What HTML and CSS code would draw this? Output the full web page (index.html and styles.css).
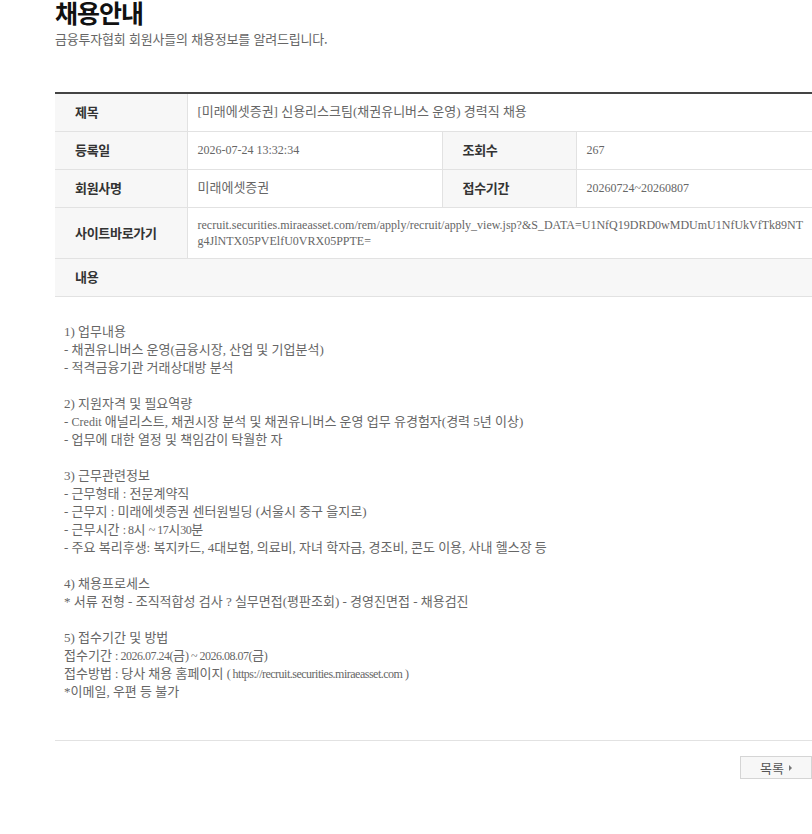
FILE: index.html
```
<!DOCTYPE html>
<html lang="ko">
  <head>
    <meta charset="UTF-8" />
    <meta name="viewport" content="width=device-width, initial-scale=1.0" />
    <title>채용안내</title>
    <link rel="stylesheet" href="styles.css">
  </head>
  <body>
    <div class="wrap">
      <div class="page-head">
        <h1 class="page-title">채용안내</h1>
        <p class="page-desc">금융투자협회 회원사들의 채용정보를 알려드립니다.</p>
      </div>

      <table class="view-table">
        <colgroup>
          <col class="col-label" />
          <col class="col-value" />
          <col class="col-label2" />
          <col />
        </colgroup>
        <tr>
          <th>제목</th>
          <td colspan="3">[미래에셋증권] 신용리스크팀(채권유니버스 운영) 경력직 채용</td>
        </tr>
        <tr>
          <th>등록일</th>
          <td class="en">2026-07-24 13:32:34</td>
          <th class="th-mid">조회수</th>
          <td class="en">267</td>
        </tr>
        <tr>
          <th>회원사명</th>
          <td>미래에셋증권</td>
          <th class="th-mid">접수기간</th>
          <td class="en">20260724~20260807</td>
        </tr>
        <tr>
          <th>사이트바로가기</th>
          <td colspan="3" class="td-link en">recruit.securities.miraeasset.com/rem/apply/recruit/apply_view.jsp?&amp;S_DATA=U1NfQ19DRD0wMDUmU1NfUkVfTk89NT g4JlNTX05PVElfU0VRX05PPTE=</td>
        </tr>
        <tr>
          <th colspan="4" class="th-full">내용</th>
        </tr>
      </table>

      <div class="view-body">
        <p>1) 업무내용<br>
        - 채권유니버스 운영(금융시장, 산업 및 기업분석)<br>
        - 적격금융기관 거래상대방 분석</p>

        <p>2) 지원자격 및 필요역량<br>
        - <span class="en">Credit</span> 애널리스트, 채권시장 분석 및 채권유니버스 운영 업무 유경험자(경력 5년 이상)<br>
        - 업무에 대한 열정 및 책임감이 탁월한 자</p>

        <p>3) 근무관련정보<br>
        - 근무형태 : 전문계약직<br>
        - 근무지 : 미래에셋증권 센터원빌딩 (서울시 중구 을지로)<br>
        - 근무시간 <span class="tight">: 8</span>시 <span class="tight">~ 17</span>시<span class="tight">30</span>분<br>
        - 주요 복리후생: 복지카드, 4대보험, 의료비, 자녀 학자금, 경조비, 콘도 이용, 사내 헬스장 등</p>

        <p>4) 채용프로세스<br>
        * 서류 전형 - 조직적합성 검사 ? 실무면접(평판조회) - 경영진면접 - 채용검진</p>

        <p>5) 접수기간 및 방법<br>
        접수기간 <span class="tight">: 2026.07.24(</span>금<span class="tight">) ~ 2026.08.07(</span>금<span class="tight">)</span><br>
        접수방법 <span class="tight">:</span> 당사 채용 홈페이지 <span class="tight">( https://recruit.securities.miraeasset.com )</span><br>
        *이메일, 우편 등 불가</p>
      </div>

      <div class="btn-area">
        <a class="btn-list" href="#">목록 <span class="arrow"></span></a>
      </div>
    </div>
  </body>
</html>
```

FILE: styles.css
```
html,
body {
  overflow: hidden;
}

body {
  margin: 0;
  background: #fff;
  color: #666;
  font-family: "Liberation Serif", "Noto Sans CJK KR", serif;
  font-size: 13px;
}

.en {
  font-size: 12px;
}

.tight {
  font-size: 12px;
  letter-spacing: -0.5px;
}

.wrap {
  width: 757px;
  padding-left: 55px;
}

.page-head {
  margin-top: -5px;
  height: 97px;
}

.page-title {
  margin: 0;
  font-family: "Noto Sans CJK KR", sans-serif;
  font-size: 25px;
  font-weight: 700;
  line-height: 34px;
  letter-spacing: -1px;
  color: #111;
}

.page-desc {
  margin: 1px 0 0;
  font-family: "Noto Sans CJK KR", sans-serif;
  font-size: 13px;
  line-height: 18px;
  letter-spacing: -0.2px;
  color: #666;
}

.view-table {
  width: 100%;
  border-collapse: collapse;
  table-layout: fixed;
  border-top: 2px solid #444;
}

.col-label {
  width: 132px;
}

.col-value {
  width: 255px;
}

.col-label2 {
  width: 134px;
}

.view-table th,
.view-table td {
  padding: 10px 10px 11px 20px;
  line-height: 16px;
  text-align: left;
  vertical-align: middle;
  border-bottom: 1px solid #e2e2e2;
}

.view-table th {
  background: #f7f7f7;
  border-right: 1px solid #e2e2e2;
  font-family: "Noto Sans CJK KR", sans-serif;
  font-size: 13px;
  font-weight: 700;
  letter-spacing: -0.3px;
  color: #333;
}

.view-table td {
  padding-left: 10px;
  color: #666;
}

.view-table .th-mid {
  border-left: 1px solid #e2e2e2;
}

.view-table .th-full {
  border-right: none;
}

.view-table .td-link {
  padding-top: 9px;
  padding-bottom: 9px;
  padding-right: 0;
  overflow-wrap: anywhere;
}

.view-body {
  padding: 26px 9px 39px;
  line-height: 18px;
  border-bottom: 1px solid #e2e2e2;
}

.view-body p {
  margin: 0 0 18px;
}

.view-body p:last-child {
  margin-bottom: 0;
}

.btn-area {
  display: flex;
  justify-content: flex-end;
  padding-top: 15px;
}

.btn-list {
  display: flex;
  align-items: center;
  justify-content: center;
  gap: 5px;
  width: 70px;
  height: 21px;
  border: 1px solid #d5d5d5;
  background: #f7f7f7;
  font-family: "Noto Sans CJK KR", sans-serif;
  font-size: 13px;
  color: #555;
  text-decoration: none;
}

.arrow {
  width: 0;
  height: 0;
  border-top: 3px solid transparent;
  border-bottom: 3px solid transparent;
  border-left: 3px solid #777;
}
```
